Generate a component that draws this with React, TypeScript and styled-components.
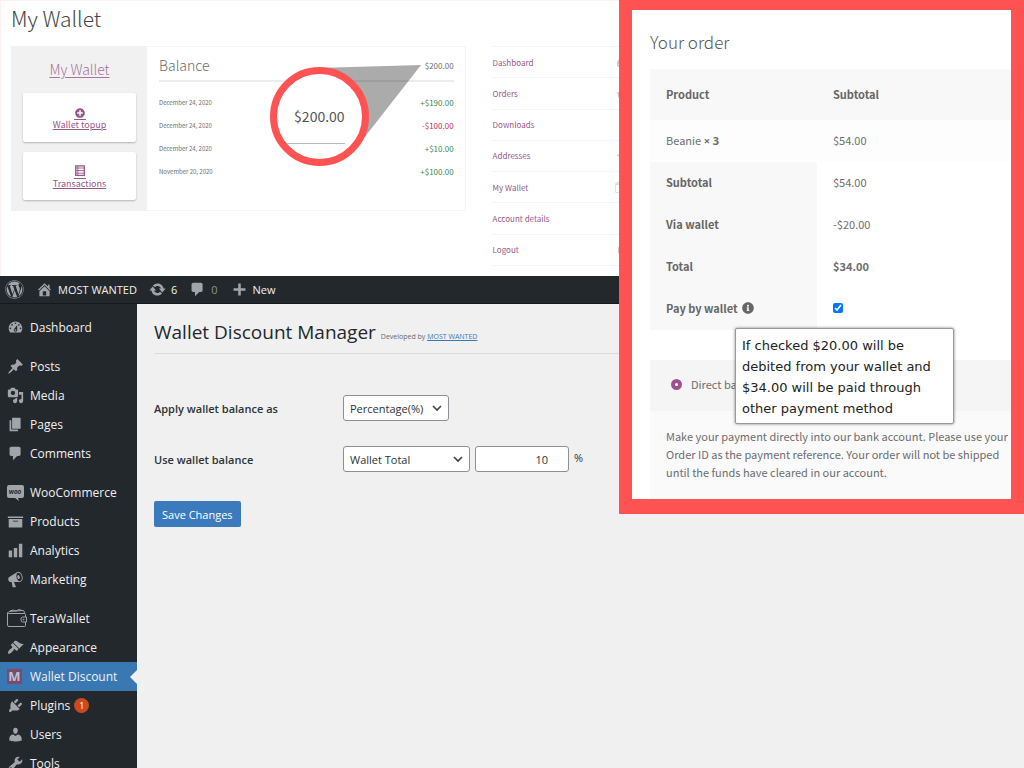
import React from 'react';
import styled, { createGlobalStyle } from 'styled-components';
import {
  FaWordpress,
  FaPlusCircle,
  FaInfoCircle,
  FaShoppingBasket,
  FaTachometerAlt,
  FaFileArchive,
  FaHome,
  FaUser,
  FaSignOutAlt,
} from 'react-icons/fa';

const shopFont = '"Noto Sans CJK SC", "Open Sans", sans-serif';
const adminFont = '"Open Sans", "Noto Sans", sans-serif';
const coral = '#ff5252';
const plum = '#96588a';

const GlobalStyle = createGlobalStyle`
  *, *::before, *::after { box-sizing: border-box; }
  body { margin: 0; background: #f0f0f1; }
  h1, h2, h3, p, ul { margin: 0; padding: 0; }
  ul { list-style: none; }
`;

const Page = styled.div`
  position: relative;
  display: flex;
  flex-direction: column;
  height: 100vh;
  overflow: hidden;
`;

/* ---------- Customer account page ---------- */

const Account = styled.section`
  flex: none;
  display: grid;
  grid-template-columns: 10fr 3fr;
  column-gap: 26px;
  align-items: start;
  padding: 0 396px 10px 10px;
  border-left: 1px solid #fff0f0;
  border-top: 1px solid #fff0f0;
  background: #fff;
  color: #6d6d6d;
  font-family: ${shopFont};
`;

const AccountTitle = styled.h1`
  grid-column: 1 / -1;
  height: 45px;
  color: #444;
  font-size: 21px;
  font-weight: 300;
  line-height: 34px;
`;

const WalletBox = styled.div`
  position: relative;
  display: flex;
  height: 165px;
`;

const WalletSide = styled.div`
  display: flex;
  flex-direction: column;
  align-items: stretch;
  gap: 10px;
  width: 136px;
  padding: 12px 11px 11px 12px;
  background: #f1f1f1;
`;

const SideTitle = styled.a`
  height: 25px;
  color: #a8739e;
  font-size: 14px;
  font-weight: 300;
  line-height: 23px;
  text-align: center;
  text-underline-offset: 2px;
`;

const SideCard = styled.a`
  flex: 1;
  display: flex;
  flex-direction: column;
  align-items: center;
  justify-content: center;
  border-radius: 2px;
  background: #fff;
  box-shadow: 0 1px 2px rgba(0, 0, 0, 0.25);
  color: ${plum};
  font-size: 9px;
  line-height: 10px;
  padding-top: 3px;

  svg {
    border-bottom: 1px solid ${plum};
    padding-bottom: 1px;
  }
`;

const BalancePanel = styled.div`
  flex: 1;
  padding: 6px 11px 6px 12px;
  border: 1px solid #f5f5f5;
  border-left: 0;
`;

const BalanceHead = styled.div`
  display: flex;
  align-items: center;
  justify-content: space-between;
  height: 29px;
  margin-bottom: 9px;
  padding-bottom: 3px;
  border-bottom: 2px solid #ececec;
  font-size: 8px;

  h3 {
    font-size: 14px;
    font-weight: 300;
  }
`;

const Entry = styled.li`
  display: flex;
  align-items: center;
  justify-content: space-between;
  height: 23px;
  font-size: 6px;
`;

const Amount = styled.span<{ $debit?: boolean }>`
  color: ${(p) => (p.$debit ? '#c9304a' : '#3f8a4a')};
  font-size: 8px;
`;

const Beam = styled.svg`
  position: absolute;
  top: 17px;
  right: 45px;
  width: 104px;
  height: 84px;
`;

const Lens = styled.div`
  position: absolute;
  top: 21px;
  right: 97px;
  display: flex;
  align-items: center;
  justify-content: flex-end;
  width: 99px;
  height: 99px;
  overflow: hidden;
  border: 7px solid ${coral};
  border-radius: 50%;
  background: #fff;
  color: #555;
  font-size: 14px;

  span {
    display: flex;
    align-items: center;
    justify-content: flex-end;
    width: 64px;
    height: 54px;
    margin-right: 17px;
    border-bottom: 1px solid #bbb;
  }
`;

const AccountNav = styled.ul`
  display: grid;
  grid-auto-rows: 1fr;
  height: 220px;
  border-top: 1px solid #f4f4f4;

  li {
    display: flex;
    align-items: center;
    justify-content: space-between;
    padding-left: 1px;
    border-bottom: 1px solid #f4f4f4;
  }

  a {
    color: ${plum};
    font-size: 8px;
    text-decoration: none;
  }

  svg {
    color: #d5bcd0;
  }
`;

/* ---------- Checkout panel ---------- */

const Checkout = styled.aside`
  position: absolute;
  top: 0;
  right: 0;
  width: 405px;
  border: solid ${coral};
  border-width: 10px 13px 15px;
  padding: 15px 0 0 18px;
  background: #fff;
  color: #6d6d6d;
  font-family: ${shopFont};
  font-size: 11px;
`;

const CheckoutTitle = styled.h2`
  height: 44px;
  color: #555;
  font-size: 17px;
  font-weight: 300;
  line-height: 33px;
`;

const OrderTable = styled.table`
  width: 100%;
  border-collapse: collapse;
  table-layout: fixed;
  line-height: 18px;
  text-align: left;

  th,
  td {
    height: 42px;
    padding: 0 16px 2px;
  }

  th:first-child,
  td:first-child {
    width: 167px;
  }

  th {
    background: #f8f8f8;
    color: #666;
  }

  thead th {
    height: 51px;
  }

  tbody td {
    background: #fdfdfd;
  }
`;

const Quantity = styled.strong`
  font-family: "Open Sans", sans-serif;
`;

const InfoLabel = styled.label`
  display: flex;
  align-items: center;
  gap: 4px;
`;

const WalletCheck = styled.input`
  display: block;
  width: 10px;
  height: 10px;
  margin: 0;
`;

const Method = styled.label`
  display: flex;
  align-items: center;
  gap: 9px;
  height: 51px;
  margin-top: 30px;
  padding: 0 0 3px 21px;
  background: #f5f5f5;
`;

const MethodRadio = styled.input`
  appearance: none;
  width: 11px;
  height: 11px;
  margin: 0;
  border: 4px solid #a05091;
  border-radius: 50%;
  background: #fff;
`;

const MethodNote = styled.p`
  padding: 16px 0 18px 16px;
  background: #fafafa;
  line-height: 18px;
`;

const Tooltip = styled.div`
  position: absolute;
  top: 318px;
  left: 103px;
  width: 219px;
  padding: 6px 6px 4px;
  border: 1px solid #999;
  border-radius: 2px;
  background: #fff;
  box-shadow: 0 0 3px rgba(0, 0, 0, 0.5);
  color: #222;
  font-family: "DejaVu Sans", Verdana, sans-serif;
  font-size: 13px;
  line-height: 21px;
`;

/* ---------- Admin ---------- */

const Admin = styled.div`
  flex: 1;
  display: flex;
  flex-direction: column;
  min-height: 0;
  color: #2c3338;
  font-family: ${adminFont};
  font-size: 12px;
`;

const AdminBar = styled.header`
  flex: none;
  display: flex;
  align-items: center;
  height: 28px;
  padding-left: 5px;
  border-bottom: 1px solid #15191c;
  background: #23282d;
  color: #a0a5aa;
  font-size: 11px;
`;

const BarItem = styled.a<{ $gap: number }>`
  display: flex;
  align-items: center;
  gap: 5px;
  margin-right: ${(p) => p.$gap}px;
  color: #f0f0f1;
  text-decoration: none;

  svg {
    color: #a0a5aa;
  }
`;

const Muted = styled.span`
  color: #8c9196;
`;

const AdminBody = styled.div`
  flex: 1;
  display: flex;
  min-height: 0;
`;

const Sidebar = styled.nav`
  flex: none;
  display: flex;
  flex-direction: column;
  gap: 10px;
  width: 137px;
  padding-top: 9px;
  overflow: hidden;
  background: #23282d;
`;

const MenuItem = styled.a<{ $active?: boolean }>`
  position: relative;
  display: flex;
  align-items: center;
  height: 29px;
  padding-left: 7px;
  background: ${(p) => (p.$active ? '#3a78b4' : 'transparent')};
  color: #f0f0f1;
  text-decoration: none;

  &::after {
    content: '';
    display: ${(p) => (p.$active ? 'block' : 'none')};
    position: absolute;
    right: 0;
    border: 7px solid transparent;
    border-right-color: #f0f0f1;
    border-left-width: 0;
  }
`;

const MenuIcon = styled.span`
  flex: none;
  display: flex;
  width: 23px;
  color: #a0a5aa;
`;

const Monogram = styled.span`
  width: 15px;
  height: 15px;
  background: #7c4a6b;
  color: #b9c3d6;
  font-size: 13px;
  font-weight: 700;
  line-height: 15px;
  text-align: center;
`;

const Badge = styled.span`
  width: 15px;
  height: 15px;
  margin-left: 4px;
  border-radius: 50%;
  background: #ca4a1f;
  color: #fff;
  font-size: 9px;
  line-height: 15px;
  text-align: center;
`;

const Content = styled.main`
  flex: 1;
  padding: 12px 17px;
`;

const ContentHead = styled.div`
  display: flex;
  align-items: baseline;
  gap: 5px;
  height: 38px;
  border-bottom: 1px solid #dcdcde;
  font-size: 7px;
  line-height: 32px;
  color: #646970;

  h1 {
    color: #23282d;
    font-size: 19px;
    font-weight: 400;
  }

  a {
    color: #3a78b4;
  }
`;

const Form = styled.form`
  padding-top: 41px;
`;

const SettingRow = styled.div`
  display: flex;
  align-items: center;
  gap: 5px;
  height: 26px;
  margin-bottom: 25px;
`;

const SettingLabel = styled.label`
  width: 184px;
  font-size: 11px;
  font-weight: 600;
`;

const SelectWrap = styled.span<{ $width: number }>`
  position: relative;
  display: flex;
  width: ${(p) => p.$width}px;
  height: 26px;

  svg {
    position: absolute;
    top: 9px;
    right: 7px;
    pointer-events: none;
  }
`;

const Select = styled.select`
  appearance: none;
  width: 100%;
  padding: 0 6px;
  border: 1px solid #8c8f94;
  border-radius: 3px;
  background: #fff;
  color: #2c3338;
  font: inherit;
  font-size: 11px;
`;

const NumberBox = styled.input`
  width: 94px;
  height: 26px;
  padding: 0 20px 0 7px;
  border: 1px solid #8c8f94;
  border-radius: 3px;
  background: #fff;
  color: #2c3338;
  font: inherit;
  font-size: 11px;
  text-align: right;
`;

const Unit = styled.span`
  padding-bottom: 3px;
  font-size: 11px;
`;

const SaveButton = styled.button`
  height: 26px;
  margin-top: 4px;
  padding: 0 8px;
  border: 0;
  border-radius: 2px;
  background: #3a7abd;
  color: #fff;
  font: inherit;
  font-size: 11px;
`;

/* ---------- Icons ---------- */

const dash: Record<string, string> = {
  dashboard:
    'M3.76 16h12.48c1.1-1.37 1.76-3.11 1.76-5 0-4.42-3.58-8-8-8s-8 3.58-8 8c0 1.89.66 3.63 1.76 5zM10 4c.55 0 1 .45 1 1s-.45 1-1 1-1-.45-1-1 .45-1 1-1zM6 6c.55 0 1 .45 1 1s-.45 1-1 1-1-.45-1-1 .45-1 1-1zm8 0c.55 0 1 .45 1 1s-.45 1-1 1-1-.45-1-1 .45-1 1-1zm-5.37 5.55L12 7v6c0 1.1-.9 2-2 2s-2-.9-2-2c0-.57.24-1.08.63-1.45zM4 10c.55 0 1 .45 1 1s-.45 1-1 1-1-.45-1-1 .45-1 1-1zm12 0c.55 0 1 .45 1 1s-.45 1-1 1-1-.45-1-1 .45-1 1-1zm-5 3c0-.55-.45-1-1-1s-1 .45-1 1 .45 1 1 1 1-.45 1-1z',
  post: 'M10.44 3.02l1.82-1.82 6.36 6.35-1.83 1.82c-1.05-.68-2.48-.57-3.41.36l-.75.75c-.92.93-1.04 2.35-.35 3.41l-1.83 1.82-2.41-2.41-2.8 2.79c-.42.42-3.38 2.71-3.8 2.29s1.86-3.39 2.28-3.81l2.79-2.79L4.1 9.36l1.83-1.82c1.05.69 2.48.57 3.4-.36l.75-.75c.93-.92 1.05-2.35.36-3.41z',
  media:
    'M13 11V4c0-.55-.45-1-1-1h-1.67L9 1H5L3.67 3H2c-.55 0-1 .45-1 1v7c0 .55.45 1 1 1h10c.55 0 1-.45 1-1zM7 4.5c1.38 0 2.5 1.12 2.5 2.5S8.38 9.5 7 9.5 4.5 8.38 4.5 7 5.62 4.5 7 4.5zM14 6h5v10.5c0 1.38-1.12 2.5-2.5 2.5S14 17.88 14 16.5s1.12-2.5 2.5-2.5c.17 0 .34.02.5.05V9h-3V6zm-4 8.05V13h2v3.5c0 1.38-1.12 2.5-2.5 2.5S7 17.88 7 16.5 8.12 14 9.5 14c.17 0 .34.02.5.05z',
  page: 'M6 15V2h10v13H6zm-1 1h8v2H3V5h2v11z',
  comment: 'M5 2h9c1.1 0 2 .9 2 2v7c0 1.1-.9 2-2 2h-2l-5 5v-5H5c-1.1 0-2-.9-2-2V4c0-1.1.9-2 2-2z',
  archive: 'M19 4v2H1V4h18zM2 7h16v10H2V7zm11 3V9H7v1h6z',
  chart: 'M18 18V2h-4v16h4zm-6 0V7H8v11h4zm-6 0v-8H2v8h4z',
  megaphone:
    'M18.15 5.94c.46 1.62.38 3.22-.02 4.48-.42 1.28-1.26 2.18-2.3 2.48-.16.06-.26.06-.4.06-.06.02-.12.02-.18.02-.06.02-.14.02-.22.02h-6.8l2.22 5.5c.02.14-.06.26-.14.34-.08.1-.24.16-.34.16H6.95c-.1 0-.26-.06-.34-.16-.08-.08-.16-.2-.14-.34l-1-5.5H4.25l-.02-.02c-.5.06-1.08-.18-1.54-.62s-.88-1.08-1.06-1.88c-.24-.8-.2-1.56-.02-2.2.18-.62.58-1.08 1.06-1.3l.02-.02 9-5.4c.1-.06.18-.1.24-.16.06-.04.14-.08.24-.12.16-.08.28-.12.5-.18 1.04-.3 2.24.1 3.22.98s1.84 2.24 2.26 3.86zm-2.58 5.98h-.02c.4-.1.74-.34 1.04-.7.58-.7.86-1.76.86-3.04 0-.64-.1-1.3-.28-1.98-.34-1.36-1.02-2.5-1.78-3.24s-1.68-1.1-2.46-.88c-.82.22-1.4.96-1.7 2-.32 1.04-.28 2.36.06 3.72.38 1.36 1 2.5 1.8 3.24.78.74 1.62 1.1 2.48.88zm-2.54-7.08c.22-.04.42-.02.62.04.38.16.76.48 1.02 1s.42 1.2.42 1.78c0 .3-.04.56-.12.8-.18.48-.44.84-.86.94-.34.1-.8-.06-1.14-.4s-.64-.86-.78-1.5c-.18-.62-.12-1.24.02-1.72s.48-.84.82-.94z',
  appearance:
    'M14.48 11.06L7.41 3.99l1.5-1.5c.5-.56 2.3-.47 3.51.32 1.21.8 1.43 1.28 2.91 2.1 1.18.64 2.45 1.26 4.45.85zm-.71.71L6.7 4.7 4.93 6.47c-.39.39-.39 1.02 0 1.41l1.06 1.06c.39.39.39 1.03 0 1.42-.6.6-1.43 1.11-2.21 1.69-.35.26-.7.53-1.01.84C1.43 14.23.4 16.08 1.4 17.07c.99 1 2.84-.03 4.18-1.36.31-.31.58-.66.85-1.02.57-.78 1.08-1.61 1.69-2.21.39-.39 1.02-.39 1.41 0l1.06 1.06c.39.39 1.02.39 1.41 0z',
  plugin:
    'M13.11 4.36L9.87 7.6 8 5.73l3.24-3.24c.35-.34 1.05-.2 1.56.32.52.51.66 1.21.31 1.55zm-8 1.77l.91-1.12 9.01 9.01-1.19.84c-.71.71-2.63 1.16-3.82 1.16H6.14L4.9 17.26c-.59.59-1.54.59-2.12 0-.59-.58-.59-1.53 0-2.12l1.24-1.24v-3.88c0-1.13.4-3.19 1.09-3.89zm7.26 3.97l3.24-3.24c.34-.35 1.04-.21 1.55.31.52.51.66 1.21.31 1.55l-3.24 3.25z',
  user: 'M10 9.25c-2.27 0-2.73-3.44-2.73-3.44C7 4.02 7.82 2 9.97 2c2.16 0 2.98 2.02 2.71 3.81 0 0-.41 3.44-2.68 3.44zm0 2.57L12.72 10c2.39 0 4.52 2.33 4.52 4.53v2.49s-3.65 1.13-7.24 1.13c-3.65 0-7.24-1.13-7.24-1.13v-2.49c0-2.25 1.94-4.48 4.47-4.48z',
  tools:
    'M16.68 9.77c-1.34 1.34-3.3 1.67-4.95.99l-5.41 6.52c-.99.99-2.59.99-3.58 0s-.99-2.59 0-3.57l6.52-5.42c-.68-1.65-.35-3.61.99-4.95 1.28-1.28 3.12-1.62 4.72-1.06l-2.89 2.89 2.82 2.82 2.86-2.87c.53 1.58.18 3.39-1.08 4.65zM3.81 16.21c.4.39 1.04.39 1.43 0 .4-.4.4-1.04 0-1.43-.39-.4-1.03-.4-1.43 0-.39.39-.39 1.03 0 1.43z',
  home: 'M16 8.5l1.53 1.53-1.06 1.06L10 4.6l-6.47 6.5-1.06-1.07L10 2.5l4 4v-2h2v4zm-6-2.46l6 5.99V18H4v-5.97zM12 17v-5H8v5h4z',
  update:
    'M10.2 2.800c3.530 0 6.430 2.610 6.920 6h2.480l-4 4.600-4-4.600h2.420c-.45-1.600-1.900-2.900-3.820-2.900-1.300 0-2.400.6-3.140 1.560L4.600 5.200C5.900 3.700 8.100 2.800 10.200 2.800zm-.4 14.400c-3.520 0-6.430-2.610-6.920-6H.4l4-4.600c1.330 1.530 2.660 3.060 4 4.600H5.980c.45 1.600 1.900 2.900 3.820 2.900 1.300 0 2.400-.6 3.140-1.560l2.460 2.260c-1.280 1.500-3.500 2.400-5.600 2.400z',
  plus: 'M17 8.500v3h-5.500V17h-3v-5.500H3v-3h5.500V3h3v5.500z',
};

const Dash = ({ name, size = 17 }: { name: string; size?: number }) => (
  <svg width={size} height={size} viewBox="0 0 20 20" fill="currentColor" fillRule="evenodd" aria-hidden="true">
    <path d={dash[name]} />
  </svg>
);

const WooIcon = () => (
  <svg width="17" height="18" viewBox="0 0 17 18" aria-hidden="true">
    <path d="M2 1h13q2 0 2 2v9q0 2-2 2h-4l1 3-4-3H2q-2 0-2-2V3q0-2 2-2z" fill="#a0a5aa" />
    <text x="8" y="10" fill="#23282d" fontFamily="Lato" fontStyle="italic" fontWeight="900" fontSize="7" textAnchor="middle">
      woo
    </text>
  </svg>
);

const PurseIcon = ({ size = 21 }: { size?: number }) => (
  <svg width={size} height={size} viewBox="0 0 21 21" fill="none" stroke="currentColor" aria-hidden="true">
    <path d="M18.500 9V6.500q0-1-1-1H1.500q-1-1 .5-2L16 2.500q1.500 0 1.500 3M.5 4.500V17q0 1.500 1.500 1.500h15.500q1 0 1-1V14M18.500 9h-3q-1.500 0-1.500 2.500t1.500 2.500h4V9z" />
    <path d="M3 3l3-1 3 1 3-1.500 3 1" />
    <circle cx="16.500" cy="11.500" r=".5" />
  </svg>
);

const LedgerIcon = () => (
  <svg width="12" height="14" viewBox="0 0 12 14" fill="none" stroke="currentColor" aria-hidden="true">
    <path d="M1 1h10v11H1z" strokeWidth="1.500" />
    <path d="M3.500 1v11M1 3.500h10M1 6.500h10M1 9.500h10" />
  </svg>
);

const Chevron = () => (
  <svg width="10" height="8" viewBox="0 0 10 8" fill="none" stroke="#444" strokeWidth="1.700" aria-hidden="true">
    <path d="M1 2l4 4 4-4" />
  </svg>
);

/* ---------- Data ---------- */

const entries = [
  { date: 'December 24, 2020', amount: '+$190.00' },
  { date: 'December 24, 2020', amount: '-$100.00', debit: true },
  { date: 'December 24, 2020', amount: '+$10.00' },
  { date: 'November 20, 2020', amount: '+$100.00' },
];

const accountLinks = [
  { label: 'Dashboard', icon: <FaTachometerAlt size={11} /> },
  { label: 'Orders', icon: <FaShoppingBasket size={11} /> },
  { label: 'Downloads', icon: <FaFileArchive size={8} /> },
  { label: 'Addresses', icon: <FaHome size={11} /> },
  { label: 'My Wallet', icon: <PurseIcon size={13} /> },
  { label: 'Account details', icon: <FaUser size={9} /> },
  { label: 'Logout', icon: <FaSignOutAlt size={10} /> },
];

type Item = { label: string; icon: React.ReactNode; active?: boolean; badge?: string };

const menuGroups: Item[][] = [
  [{ label: 'Dashboard', icon: <Dash name="dashboard" /> }],
  [
    { label: 'Posts', icon: <Dash name="post" /> },
    { label: 'Media', icon: <Dash name="media" /> },
    { label: 'Pages', icon: <Dash name="page" /> },
    { label: 'Comments', icon: <Dash name="comment" /> },
  ],
  [
    { label: 'WooCommerce', icon: <WooIcon /> },
    { label: 'Products', icon: <Dash name="archive" /> },
    { label: 'Analytics', icon: <Dash name="chart" /> },
    { label: 'Marketing', icon: <Dash name="megaphone" /> },
  ],
  [
    { label: 'TeraWallet', icon: <PurseIcon /> },
    { label: 'Appearance', icon: <Dash name="appearance" /> },
    { label: 'Wallet Discount', icon: <Monogram>M</Monogram>, active: true },
    { label: 'Plugins', icon: <Dash name="plugin" />, badge: '1' },
    { label: 'Users', icon: <Dash name="user" /> },
    { label: 'Tools', icon: <Dash name="tools" /> },
  ],
];

const AccountPage = () => (
  <Account>
    <AccountTitle>My Wallet</AccountTitle>
    <WalletBox>
      <WalletSide>
        <SideTitle href="#wallet">My Wallet</SideTitle>
        <SideCard href="#topup">
          <FaPlusCircle size={12} />
          Wallet topup
        </SideCard>
        <SideCard href="#transactions">
          <LedgerIcon />
          Transactions
        </SideCard>
      </WalletSide>
      <BalancePanel>
        <BalanceHead>
          <h3>Balance</h3>
          <span>$200.00</span>
        </BalanceHead>
        <ul>
          {entries.map((e, i) => (
            <Entry key={i}>
              {e.date}
              <Amount $debit={e.debit}>{e.amount}</Amount>
            </Entry>
          ))}
        </ul>
      </BalancePanel>
      <Beam viewBox="0 0 104 84" aria-hidden="true">
        <path d="M0 5L104 2L40 84Z" fill="#000" fillOpacity="0.33" />
      </Beam>
      <Lens>
        <span>$200.00</span>
      </Lens>
    </WalletBox>
    <AccountNav>
      {accountLinks.map((l) => (
        <li key={l.label}>
          <a href="#account">{l.label}</a>
          {l.icon}
        </li>
      ))}
    </AccountNav>
  </Account>
);

const CheckoutPanel = () => (
  <Checkout>
    <CheckoutTitle>Your order</CheckoutTitle>
    <OrderTable>
      <thead>
        <tr>
          <th>Product</th>
          <th>Subtotal</th>
        </tr>
      </thead>
      <tbody>
        <tr>
          <td>
            Beanie <Quantity>× 3</Quantity>
          </td>
          <td>$54.00</td>
        </tr>
      </tbody>
      <tfoot>
        <tr>
          <th>Subtotal</th>
          <td>$54.00</td>
        </tr>
        <tr>
          <th>Via wallet</th>
          <td>-$20.00</td>
        </tr>
        <tr>
          <th>Total</th>
          <td>
            <strong>$34.00</strong>
          </td>
        </tr>
        <tr>
          <th>
            <InfoLabel htmlFor="pay-wallet">
              Pay by wallet <FaInfoCircle size={12} />
            </InfoLabel>
          </th>
          <td>
            <WalletCheck id="pay-wallet" type="checkbox" defaultChecked />
          </td>
        </tr>
      </tfoot>
    </OrderTable>
    <Method>
      <MethodRadio type="radio" name="method" defaultChecked />
      Direct bank transfer
    </Method>
    <MethodNote>
      Make your payment directly into our bank account. Please use your Order ID as the payment reference. Your order
      will not be shipped until the funds have cleared in our account.
    </MethodNote>
    <Tooltip role="tooltip">
      If checked $20.00 will be debited from your wallet and $34.00 will be paid through other payment method
    </Tooltip>
  </Checkout>
);

export default function App() {
  return (
    <Page>
      <GlobalStyle />
      <AccountPage />
      <Admin>
        <AdminBar>
          <BarItem href="#about" $gap={12} aria-label="About WordPress">
            <FaWordpress size={19} />
          </BarItem>
          <BarItem href="#site" $gap={12}>
            <Dash name="home" />
            MOST WANTED
          </BarItem>
          <BarItem href="#updates" $gap={12}>
            <Dash name="update" />6
          </BarItem>
          <BarItem href="#comments" $gap={13}>
            <Dash name="comment" />
            <Muted>0</Muted>
          </BarItem>
          <BarItem href="#new" $gap={0}>
            <Dash name="plus" />
            New
          </BarItem>
        </AdminBar>
        <AdminBody>
          <Sidebar>
            {menuGroups.map((group, i) => (
              <ul key={i}>
                {group.map((m) => (
                  <li key={m.label}>
                    <MenuItem href="#menu" $active={m.active}>
                      <MenuIcon>{m.icon}</MenuIcon>
                      {m.label}
                      {m.badge && <Badge>{m.badge}</Badge>}
                    </MenuItem>
                  </li>
                ))}
              </ul>
            ))}
          </Sidebar>
          <Content>
            <ContentHead>
              <h1>Wallet Discount Manager</h1>
              <span>
                Developed by <a href="#author">MOST WANTED</a>
              </span>
            </ContentHead>
            <Form onSubmit={(e) => e.preventDefault()}>
              <SettingRow>
                <SettingLabel htmlFor="apply-as">Apply wallet balance as</SettingLabel>
                <SelectWrap $width={106}>
                  <Select id="apply-as">
                    <option>Percentage(%)</option>
                  </Select>
                  <Chevron />
                </SelectWrap>
              </SettingRow>
              <SettingRow>
                <SettingLabel htmlFor="use-balance">Use wallet balance</SettingLabel>
                <SelectWrap $width={127}>
                  <Select id="use-balance">
                    <option>Wallet Total</option>
                  </Select>
                  <Chevron />
                </SelectWrap>
                <NumberBox type="text" inputMode="numeric" aria-label="Wallet balance amount" defaultValue="10" />
                <Unit>%</Unit>
              </SettingRow>
              <SaveButton type="submit">Save Changes</SaveButton>
            </Form>
          </Content>
        </AdminBody>
      </Admin>
      <CheckoutPanel />
    </Page>
  );
}
